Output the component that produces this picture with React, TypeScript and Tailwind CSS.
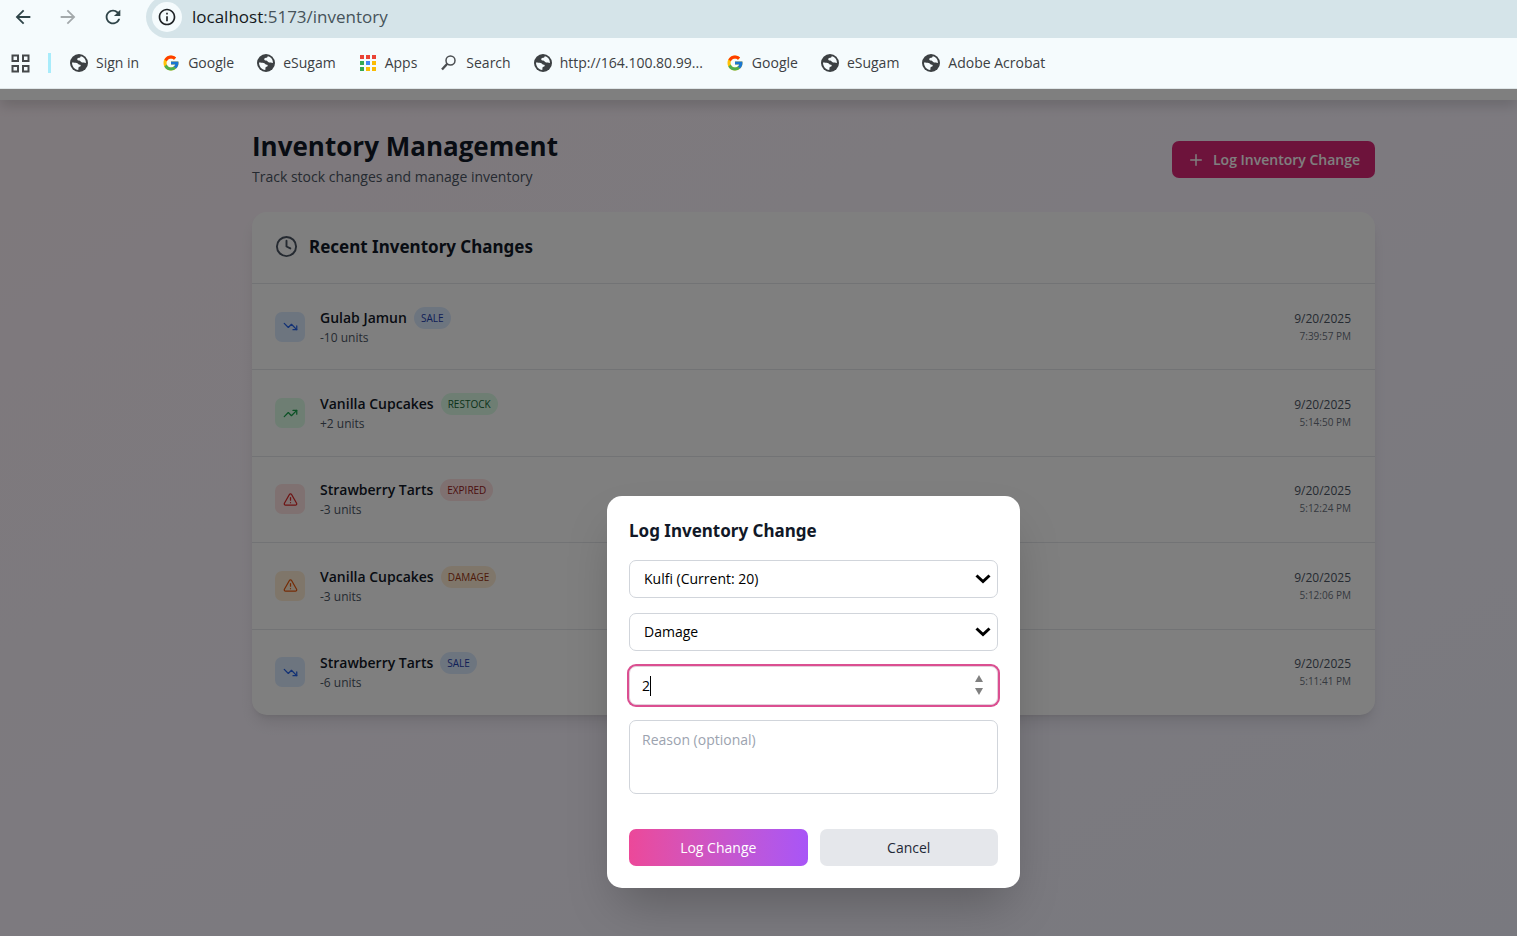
import React from "react";
import { TrendingDown, TrendingUp, TriangleAlert, Clock, Plus } from "lucide-react";
import { FcGoogle } from "react-icons/fc";
import { MdArrowBack, MdArrowForward, MdRefresh, MdInfoOutline } from "react-icons/md";

type Kind = "SALE" | "RESTOCK" | "EXPIRED" | "DAMAGE";

const changes: { name: string; kind: Kind; units: string; date: string; time: string }[] = [
  { name: "Gulab Jamun", kind: "SALE", units: "-10 units", date: "9/20/2025", time: "7:39:57 PM" },
  { name: "Vanilla Cupcakes", kind: "RESTOCK", units: "+2 units", date: "9/20/2025", time: "5:14:50 PM" },
  { name: "Strawberry Tarts", kind: "EXPIRED", units: "-3 units", date: "9/20/2025", time: "5:12:24 PM" },
  { name: "Vanilla Cupcakes", kind: "DAMAGE", units: "-3 units", date: "9/20/2025", time: "5:12:06 PM" },
  { name: "Strawberry Tarts", kind: "SALE", units: "-6 units", date: "9/20/2025", time: "5:11:41 PM" },
];

const styles: Record<Kind, { tile: string; badge: string; Icon: typeof TrendingUp }> = {
  SALE: { tile: "bg-[#dbeafe] text-[#2563eb]", badge: "bg-[#dbeafe] text-[#1e40af]", Icon: TrendingDown },
  RESTOCK: { tile: "bg-[#dcfce7] text-[#16a34a]", badge: "bg-[#dcfce7] text-[#166534]", Icon: TrendingUp },
  EXPIRED: { tile: "bg-[#fee2e2] text-[#dc2626]", badge: "bg-[#fee2e2] text-[#991b1b]", Icon: TriangleAlert },
  DAMAGE: { tile: "bg-[#ffedd5] text-[#ea580c]", badge: "bg-[#ffedd5] text-[#9a3412]", Icon: TriangleAlert },
};

function GlobeIcon() {
  return (
    <svg viewBox="0 0 18 18" className="size-[18px]" aria-hidden="true">
      <circle cx="9" cy="9" r="9" fill="#3c4043" />
      <path
        d="M2 8.6c1.600.2 3.400.100 4.600.300 1.300.300 1.600 1.100 2.400 1.500.900.400 1.700.200 1.700 1 0 .800-.700 1.100-1.500 1.400-.800.300-.700 1.400-.900 3.200C4.700 15.800 2 12.700 2 8.600z"
        fill="#f5fbfd"
      />
      <path
        d="M10.700 2.200c-.200 1.200-.800 1.400-1.700 1.600-1.100.200-1.800.600-1.800 1.500 0 1 .900 1.200 1.900 1.300 1.200.100 1.500 1.100 2.500 1.700.900.500 1.500.100 2.300.200.700.100 1.200.500 2 .400.200-3.400-2-6-5.200-6.700z"
        fill="#f5fbfd"
      />
    </svg>
  );
}

function AppsIcon() {
  const colors = ["#ea4335", "#ea4335", "#ea4335", "#34a853", "#4285f4", "#fbbc04", "#34a853", "#fbbc04", "#fbbc04"];
  return (
    <svg viewBox="0 0 18 18" className="size-[18px]" aria-hidden="true">
      {colors.map((c, i) => (
        <rect key={i} x={1 + (i % 3) * 6} y={1 + Math.floor(i / 3) * 6} width="4" height="4" fill={c} />
      ))}
    </svg>
  );
}

function LensIcon() {
  return (
    <svg viewBox="0 0 18 18" className="size-[18px]" fill="none" stroke="#4a4d50" aria-hidden="true">
      <circle cx="10.500" cy="6.500" r="4.500" strokeWidth="1.500" />
      <path d="M7.300 9.800 2 15.500" strokeWidth="2.400" />
    </svg>
  );
}

function GoogleIcon() {
  return <FcGoogle className="size-[18px]" aria-hidden="true" />;
}

const bookmarks: { label: string; Icon: () => React.ReactElement }[] = [
  { label: "Sign in", Icon: GlobeIcon },
  { label: "Google", Icon: GoogleIcon },
  { label: "eSugam", Icon: GlobeIcon },
  { label: "Apps", Icon: AppsIcon },
  { label: "Search", Icon: LensIcon },
  { label: "http://164.100.80.99...", Icon: GlobeIcon },
  { label: "Google", Icon: GoogleIcon },
  { label: "eSugam", Icon: GlobeIcon },
  { label: "Adobe Acrobat", Icon: GlobeIcon },
];

function BrowserBar() {
  return (
    <header className="relative z-20 bg-[#f5fbfd] text-[#3c4043]">
      <div className="flex h-[38px] items-end overflow-hidden">
        <nav aria-label="History" className="flex h-[42px] items-center gap-[23px] pl-3">
          <button type="button" aria-label="Back">
            <MdArrowBack className="size-[22px] text-[#2f4448]" />
          </button>
          <button type="button" aria-label="Forward">
            <MdArrowForward className="size-[22px] text-[#a3a9ab]" />
          </button>
          <button type="button" aria-label="Reload">
            <MdRefresh className="size-[22px] text-[#2f4448]" />
          </button>
        </nav>
        <div className="ml-[22px] flex h-[42px] flex-1 items-center gap-[10px] rounded-l-full bg-[#d5e4e9] pl-[6px]">
          <button type="button" aria-label="Site information" className="grid size-[30px] place-items-center rounded-full bg-[#f5fbfd]">
            <MdInfoOutline className="size-5 text-[#1f2326]" />
          </button>
          <p className="text-[17px] leading-6 text-[#46535a]">
            <span className="text-[#14181b]">localhost</span>:5173/inventory
          </p>
        </div>
      </div>
      <nav aria-label="Bookmarks" className="flex h-[51px] items-center border-b border-[#dfe6e8] pl-[11px] text-sm">
        <button type="button" aria-label="All bookmarks">
          <svg viewBox="0 0 19 19" className="size-[19px]" fill="none" stroke="#45484a" strokeWidth="2" aria-hidden="true">
            <rect x="1.500" y="1.500" width="5.500" height="5.500" />
            <rect x="12" y="1.500" width="5.500" height="5.500" />
            <rect x="1.500" y="12" width="5.500" height="5.500" />
            <rect x="12" y="12" width="5.500" height="5.500" />
          </svg>
        </button>
        <span className="ml-[18px] h-5 w-[3px] bg-[#a8ecfb]" />
        <ul className="ml-[19px] flex items-center gap-[23px]">
          {bookmarks.map(({ label, Icon }, i) => (
            <li key={i}>
              <a href="#" className="flex items-center gap-2 whitespace-nowrap">
                <Icon />
                {label}
              </a>
            </li>
          ))}
        </ul>
      </nav>
    </header>
  );
}

function SelectField({ label, options }: { label: string; options: string[] }) {
  return (
    <div className="relative">
      <select
        aria-label={label}
        className="block h-[38px] w-full appearance-none rounded-[7px] border border-[#d1d5db] bg-white px-[14px] text-sm text-black"
      >
        {options.map((o) => (
          <option key={o}>{o}</option>
        ))}
      </select>
      <svg viewBox="0 0 16 10" className="pointer-events-none absolute top-[14px] right-[7px] h-[10px] w-4" fill="none" stroke="#000" strokeWidth="3" aria-hidden="true">
        <path d="M1.500 1.500 8 7.500l6.500-6" />
      </svg>
    </div>
  );
}

function LogDialog() {
  return (
    <form
      role="dialog"
      aria-labelledby="dialog-title"
      className="w-full max-w-[413px] rounded-[15px] bg-white p-[22px] shadow-2xl"
      onSubmit={(e) => e.preventDefault()}
    >
      <h2 id="dialog-title" className="font-['Noto_Sans',sans-serif] text-[17px] leading-[26px] font-bold text-[#111827]">
        Log Inventory Change
      </h2>
      <div className="mt-4 flex flex-col gap-[15px]">
        <SelectField label="Item" options={["Kulfi (Current: 20)"]} />
        <SelectField label="Change type" options={["Damage"]} />
        <div className="relative">
          <input
            aria-label="Quantity"
            type="text"
            inputMode="numeric"
            defaultValue="2"
            className="block h-[39px] w-full rounded-[7px] border border-[#e3cfdb] bg-white px-3 text-sm text-black caret-transparent ring-2 ring-[#db4f91] outline-none"
          />
          <span className="absolute top-[10px] left-[21px] h-5 w-px bg-black" />
          <div className="absolute top-[9px] right-[15px] flex flex-col gap-[6px]">
            <button type="button" aria-label="Increase" className="block">
              <svg viewBox="0 0 8 7" className="h-[7px] w-2" fill="#808080">
                <path d="M4 0 8 7H0z" />
              </svg>
            </button>
            <button type="button" aria-label="Decrease" className="block">
              <svg viewBox="0 0 8 7" className="h-[7px] w-2" fill="#808080">
                <path d="M4 7 0 0h8z" />
              </svg>
            </button>
          </div>
        </div>
        <textarea
          aria-label="Reason"
          placeholder="Reason (optional)"
          className="block h-[74px] w-full resize-none rounded-[7px] border border-[#d1d5db] bg-white px-3 py-[9px] text-sm placeholder:text-[#9ca3af]"
        />
      </div>
      <div className="mt-[35px] flex gap-3 text-sm">
        <button type="submit" className="h-[37px] flex-1 rounded-[7px] bg-linear-to-r from-[#ec4899] to-[#a855f7] text-white">
          Log Change
        </button>
        <button type="button" className="h-[37px] flex-1 rounded-[7px] bg-[#e5e7eb] text-[#1f2937]">
          Cancel
        </button>
      </div>
    </form>
  );
}

export default function App() {
  return (
    <div className="flex min-h-screen flex-col font-['Open_Sans','Noto_Sans',sans-serif]">
      <BrowserBar />
      <div className="relative flex-1 bg-linear-to-br from-[#fdf2f8] via-[#faf5ff] to-[#f3f3ff]">
        <div className="h-[11px] bg-white shadow-[0_4px_14px_rgba(0,0,0,0.2)]" />
        <main className="pl-[110px]">
          <div className="mx-auto max-w-[1123px] pt-[29px]">
            <div className="flex items-start justify-between">
              <div>
                <h1 className="text-[26px] leading-[35px] font-bold text-[#111827]">Inventory Management</h1>
                <p className="text-sm leading-[26px] text-[#4b5563]">Track stock changes and manage inventory</p>
              </div>
              <button
                type="button"
                className="mt-3 flex h-[37px] items-center gap-2 rounded-[7px] bg-[#db2777] px-[15px] text-sm font-semibold text-white"
              >
                <Plus className="size-[18px]" />
                Log Inventory Change
              </button>
            </div>
            <section className="mt-[22px] rounded-[15px] bg-white shadow-lg">
              <div className="flex h-[71px] items-center gap-[11px] px-[23px] pb-[2px]">
                <Clock className="size-[23px] text-[#4b5563]" />
                <h2 className="font-['Noto_Sans',sans-serif] text-[17px] leading-[26px] font-bold text-[#111827]">Recent Inventory Changes</h2>
              </div>
              <ul className="grid min-h-[432px] auto-rows-fr">
                {changes.map(({ name, kind, units, date, time }, i) => {
                  const { tile, badge, Icon } = styles[kind];
                  return (
                    <li key={i} className="flex items-center border-t border-[#e5e7eb] pr-6 pl-[23px]">
                      <span className={`grid size-[30px] place-items-center rounded-[7px] ${tile}`}>
                        <Icon className="size-[15px]" />
                      </span>
                      <div className="ml-[15px]">
                        <div className="flex items-center gap-[7px]">
                          <h3 className="text-sm leading-[22px] font-semibold text-[#111827]">{name}</h3>
                          <span className={`rounded-full px-[7px] py-[3px] text-[10px] leading-4 ${badge}`}>{kind}</span>
                        </div>
                        <p className="text-xs leading-[18px] text-[#4b5563]">{units}</p>
                      </div>
                      <div className="ml-auto text-right">
                        <p className="text-xs leading-[18px] text-[#4b5563]">{date}</p>
                        <p className="text-[10px] leading-4 text-[#6b7280]">{time}</p>
                      </div>
                    </li>
                  );
                })}
              </ul>
            </section>
          </div>
        </main>
        <div className="absolute inset-0 z-10 flex items-start justify-center bg-black/50 pt-[407px] pl-[110px]">
          <LogDialog />
        </div>
      </div>
    </div>
  );
}
